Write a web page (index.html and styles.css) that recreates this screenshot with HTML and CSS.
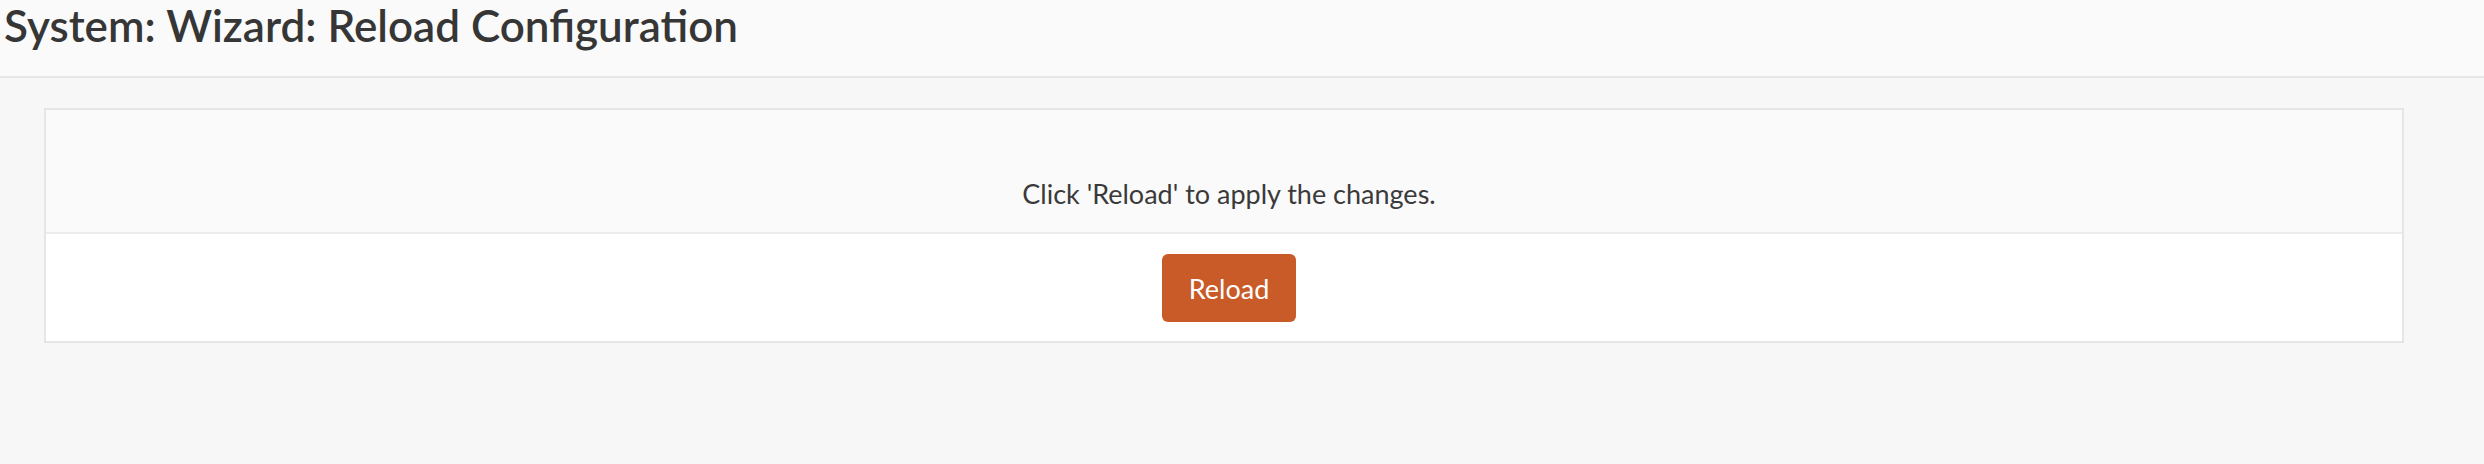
FILE: index.html
```html
<!DOCTYPE html>
<html>
<head>
<meta charset="utf-8">
<link rel="stylesheet" href="styles.css">
</head>
<body>
<header class="page-header">
  <h1 class="page-title">System: Wizard: Reload Configuration</h1>
</header>
<main class="content">
  <section class="card">
    <div class="card-head">
      <p class="card-text">Click 'Reload' to apply the changes.</p>
    </div>
    <div class="card-body">
      <button class="btn-primary" type="button">Reload</button>
    </div>
  </section>
</main>
</body>
</html>
```
FILE: styles.css
```css
html, body {
  margin: 0;
  padding: 0;
}
body {
  background: #f7f7f7;
  font-family: "Lato", "Open Sans", sans-serif;
  color: #3a3a3a;
  width: 2484px;
  height: 464px;
  overflow: hidden;
}
.page-header {
  height: 76px;
  background: #fafafa;
  border-bottom: 2px solid #e6e6e6;
  box-sizing: content-box;
}
.page-title {
  margin: 0;
  padding: 0 0 0 4px;
  font-size: 44px;
  font-weight: 600;
  line-height: 50px;
  color: #363636;
}
.content {
  padding: 30px 80px 0 44px;
}
.card {
  border: 2px solid #e6e6e6;
  background: #ffffff;
}
.card-head {
  background: #fafafa;
  border-bottom: 2px solid #ececec;
  height: 122px;
  display: flex;
  align-items: flex-end;
  justify-content: center;
  padding-left: 10px;
}
.card-text {
  margin: 0 0 22px 0;
  font-size: 27px;
  line-height: 32px;
  color: #3a3a3a;
}
.card-body {
  height: 107px;
  display: flex;
  justify-content: center;
  align-items: flex-start;
  padding-left: 10px;
}
.btn-primary {
  margin-top: 20px;
  width: 134px;
  height: 68px;
  background: #c85b27;
  border: none;
  border-radius: 6px;
  color: #ffffff;
  font-family: "Lato", "Open Sans", sans-serif;
  font-size: 27px;
  padding: 0;
}
```
